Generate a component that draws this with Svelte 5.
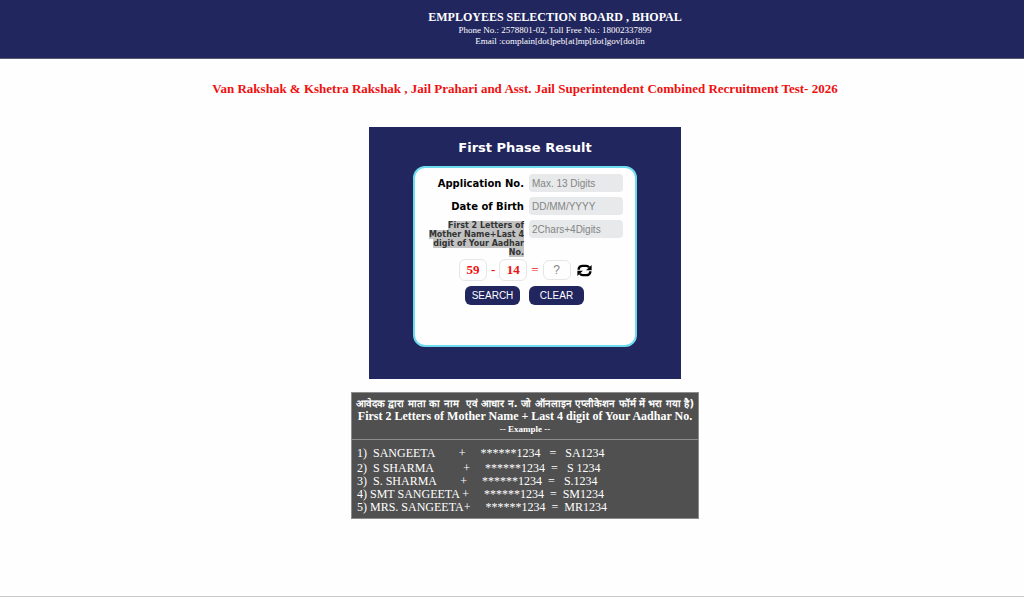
<script>
  const examples = [
    '1)  SANGEETA        +     ******1234   =   SA1234',
    '2)  S SHARMA          +     ******1234  =   S 1234',
    '3)  S. SHARMA        +     ******1234  =   S.1234',
    '4) SMT SANGEETA +     ******1234  =  SM1234',
    '5) MRS. SANGEETA+     ******1234  =  MR1234'
  ];
  let application = $state('');
  let birth = $state('');
  let code = $state('');
  let answer = $state('');
  let first = $state(59);
  let second = $state(14);

  function refresh() {
    first = 50 + Math.floor(Math.random() * 50);
    second = 10 + Math.floor(Math.random() * 40);
    answer = '';
  }

  function clear() {
    application = birth = code = answer = '';
  }
</script>

<div class="page">
  <header>
    <h1>EMPLOYEES SELECTION BOARD , BHOPAL</h1>
    <p>Phone No.: 2578801-02, Toll Free No.: 18002337899</p>
    <p class="email">Email :complain[dot]peb[at]mp[dot]gov[dot]in</p>
  </header>

  <main>
    <h2>Van Rakshak &amp; Kshetra Rakshak , Jail Prahari and Asst. Jail Superintendent Combined Recruitment Test- 2026</h2>

    <section class="panel">
      <h3>First Phase Result</h3>
      <form onsubmit={(e) => e.preventDefault()}>
        <div class="fields">
          <label for="application">Application No.</label>
          <input id="application" placeholder="Max. 13 Digits" maxlength="13" bind:value={application} />
          <label for="birth">Date of Birth</label>
          <input id="birth" placeholder="DD/MM/YYYY" bind:value={birth} />
          <label for="code" class="small"><span>First 2 Letters of Mother Name+Last 4 digit of Your Aadhar No.</span></label>
          <input id="code" placeholder="2Chars+4Digits" maxlength="6" bind:value={code} />
        </div>
        <div class="captcha">
          <span class="num">{first}</span>
          <span>-</span>
          <span class="num">{second}</span>
          <span class="equals">=</span>
          <input class="answer" placeholder="?" aria-label="Answer" bind:value={answer} />
          <button type="button" class="refresh" aria-label="New numbers" onclick={refresh}>
            <svg viewBox="0 0 16 14" width="15" height="13">
              <path d="M1.800 6.200V5.500C1.800 3.500 3.800 2 6 2h4c1.200 0 2.200.6 2.900 1.600" fill="none" stroke="#000" stroke-width="2.600" />
              <path d="M15.700 1v5.600H9.700z" />
              <path d="M14.200 7.800v.7c0 2-2 3.500-4.200 3.500H6c-1.200 0-2.200-.6-2.900-1.600" fill="none" stroke="#000" stroke-width="2.600" />
              <path d="M.3 13V7.400h6z" />
            </svg>
          </button>
        </div>
        <div class="actions">
          <button type="submit">SEARCH</button>
          <button type="button" onclick={clear}>CLEAR</button>
        </div>
      </form>
    </section>

    <section class="note">
      <div class="head">
        <p class="hindi">आवेदक द्वारा माता का नाम &nbsp;एवं आधार न. जो ऑनलाइन एप्लीकेशन फॉर्म में भरा गया है)</p>
        <p>First 2 Letters of Mother Name + Last 4 digit of Your Aadhar No.</p>
        <p class="example">-- Example --</p>
      </div>
      <div class="rows">
        {#each examples as row}
          <p>{row}</p>
        {/each}
      </div>
    </section>
  </main>
</div>

<style>
  :global(body) {
    margin: 0;
    background: #fefefe;
  }
  .page {
    box-sizing: border-box;
    min-height: 100vh;
    border-bottom: 1px solid #c8c8c8;
    font-family: "Liberation Serif", "Times New Roman", serif;
  }
  h1, h2, h3, p {
    margin: 0;
  }
  header {
    padding: 10px 0 11px 86px;
    background: #22265f;
    border-bottom: 1px solid #5a5a72;
    color: #fff;
    text-align: center;
    font-size: 9px;
    line-height: 11px;
  }
  h1 {
    font-size: 12px;
    line-height: 15px;
  }
  .email {
    padding-left: 10px;
  }
  main {
    display: flex;
    flex-direction: column;
    align-items: center;
    padding: 22px 0 0 26px;
  }
  h2 {
    color: #f01010;
    font-size: 13px;
    line-height: 16px;
    text-align: center;
  }
  .panel {
    box-sizing: border-box;
    width: 312px;
    margin-top: 30px;
    padding: 12px 44px 32px;
    background: #22265f;
    color: #fff;
  }
  h3 {
    font: bold 13px/17px "DejaVu Sans", Verdana, sans-serif;
    text-align: center;
  }
  form {
    min-height: 165px;
    margin-top: 10px;
    padding: 6px 12px 6px 10px;
    border: 2px solid #6fdcee;
    border-radius: 12px;
    background: #fefefe;
    color: #000;
  }
  .fields {
    display: grid;
    grid-template-columns: 1fr 94px;
    column-gap: 5px;
    row-gap: 4px;
    align-items: start;
  }
  .fields label {
    font: bold 10px/19px "DejaVu Sans", Verdana, sans-serif;
    text-align: right;
  }
  .fields label.small {
    font-size: 8px;
    line-height: 9px;
    padding-top: 1px;
    color: #333;
  }
  .small span {
    background: #c2c2c2;
  }
  input {
    box-sizing: border-box;
    min-width: 0;
    border: 0;
    font-family: "Liberation Sans", Arial, sans-serif;
  }
  input::placeholder {
    color: #858585;
    opacity: 1;
  }
  .fields input {
    height: 18px;
    padding: 0 3px;
    border-radius: 4px;
    background: #e7e9ea;
    font-size: 10px;
  }
  .captcha {
    display: flex;
    align-items: center;
    gap: 4px;
    margin: 2px 0 0 34px;
    color: #f01010;
    font-size: 13px;
    font-weight: bold;
    line-height: 20px;
  }
  .equals {
    font-weight: normal;
  }
  .num, .answer {
    width: 26px;
    border: 1px solid #e6e6e6;
    border-radius: 6px;
    text-align: center;
  }
  .answer {
    width: 28px;
    height: 20px;
    padding: 0;
    background: transparent;
    font-size: 12px;
  }
  .refresh {
    display: flex;
    margin-left: 2px;
    padding: 0;
    border: 0;
    background: none;
  }
  .actions {
    display: flex;
    gap: 9px;
    margin: 5px 0 0 40px;
  }
  .actions button {
    width: 55px;
    height: 19px;
    padding: 0;
    border: 0;
    border-radius: 6px;
    background: #22265f;
    color: #fff;
    font: 10px "Liberation Sans", Arial, sans-serif;
  }
  .note {
    box-sizing: border-box;
    width: 348px;
    margin-top: 13px;
    border: 1px solid #8c8c8c;
    background: #505050;
    color: #fff;
  }
  .head {
    padding: 4px 0 3px;
    border-bottom: 1px solid #8c8c8c;
    text-align: center;
    font-size: 12px;
    font-weight: bold;
    line-height: 13px;
  }
  .head .hindi {
    font-family: "DejaVu Sans", sans-serif;
    font-size: 10px;
    white-space: nowrap;
  }
  .head .example {
    font-size: 9px;
  }
  .rows {
    padding: 7px 5px 4px;
    font-size: 12px;
    line-height: 13px;
    white-space: pre;
  }
  .rows p:first-child {
    margin-bottom: 2px;
  }
</style>
